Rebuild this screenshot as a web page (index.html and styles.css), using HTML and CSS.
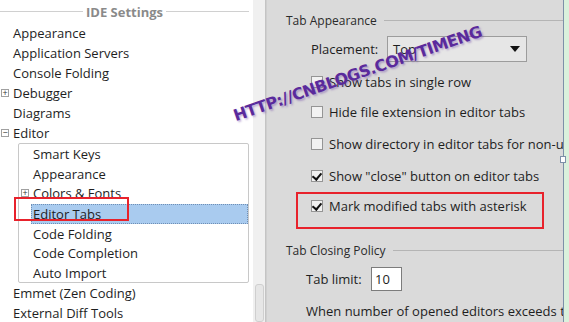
FILE: index.html
```html
<!DOCTYPE html>
<html lang="en">
<head>
  <meta charset="UTF-8" />
  <title>IDE Settings - Editor Tabs</title>
  <link rel="stylesheet" href="styles.css">
</head>
<body>
  <div class="window">
    <div class="tree">
      <div class="tree-title"><span>IDE Settings</span></div>
      <div class="row">Appearance</div>
      <div class="row">Application Servers</div>
      <div class="row">Console Folding</div>
      <div class="row"><span class="exp">+</span>Debugger</div>
      <div class="row">Diagrams</div>
      <div class="row"><span class="exp">−</span>Editor</div>
      <div class="children">
        <div class="row child">Smart Keys</div>
        <div class="row child">Appearance</div>
        <div class="row child"><span class="exp exp-child">+</span>Colors &amp; Fonts</div>
        <div class="row child selected"><span>Editor Tabs</span></div>
        <div class="row child">Code Folding</div>
        <div class="row child">Code Completion</div>
        <div class="row child">Auto Import</div>
      </div>
      <div class="row">Emmet (Zen Coding)</div>
      <div class="row">External Diff Tools</div>
    </div>
    <div class="vscroll"><div class="thumb"></div></div>
    <div class="settings">
      <div class="group-title"><span>Tab Appearance</span></div>
      <div class="field">
        <span class="label">Placement:</span>
        <div class="combo"><span>Top</span><span class="arrow"></span></div>
      </div>
      <div class="check"><span class="box"></span>Show tabs in single row</div>
      <div class="check"><span class="box"></span>Hide file extension in editor tabs</div>
      <div class="check"><span class="box"></span>Show directory in editor tabs for non-unique file names</div>
      <div class="check"><span class="box on"></span>Show "close" button on editor tabs</div>
      <div class="check"><span class="box on"></span>Mark modified tabs with asterisk</div>
      <div class="group-title closing"><span>Tab Closing Policy</span></div>
      <div class="field limit">
        <span class="label">Tab limit:</span>
        <div class="num">10</div>
      </div>
      <div class="note">When number of opened editors exceeds tab limit:</div>
    </div>
    <div class="edge"><span class="handle"></span></div>
  </div>

  <div class="mark mark-left"></div>
  <div class="mark mark-right"></div>
  <div class="watermark">HTTP://CNBLOGS.COM/TIMENG</div>
</body>
</html>
```

FILE: styles.css
```css
* {
  box-sizing: border-box;
}

body {
  margin: 0;
  width: 569px;
  height: 322px;
  overflow: hidden;
  font-family: "Open Sans", "Noto Sans", sans-serif;
  color: #1e1e1e;
  position: relative;
}

.window {
  display: flex;
  height: 322px;
}

/* left tree */
.tree {
  width: 253px;
  background: #fff;
  font-size: 13px;
}

.tree-title {
  height: 23px;
  display: flex;
  align-items: center;
  font-weight: bold;
  color: #8a8a8a;
  padding-right: 4px;
}

.tree-title::before,
.tree-title::after {
  content: "";
  flex: 1;
  border-top: 1px solid #d0d0d0;
}

.tree-title span {
  padding: 0 3px;
}

.row {
  height: 20px;
  line-height: 20px;
  padding-left: 13px;
  position: relative;
  white-space: nowrap;
}

.exp {
  position: absolute;
  left: 1px;
  top: 6px;
  width: 8px;
  height: 8px;
  border: 1px solid #a0a0a0;
  font-size: 9px;
  line-height: 6px;
  text-align: center;
  color: #333;
}

.children {
  margin: 0 4px 0 18px;
  border: 1px solid #c8c8c8;
  border-radius: 2px;
  height: 140px;
}

.child {
  padding-left: 14px;
  height: 19.7px;
}

.exp-child {
  left: 2px;
}

.selected {
  padding-left: 12px;
}

.selected span {
  display: block;
  background: #a9cbef;
  border: 1px dotted #6f8fb5;
  padding-left: 1px;
  line-height: 18px;
  margin-top: 1px;
}

.vscroll {
  width: 13px;
  background: #f0f0f0;
  border-right: 1px solid #c4c4c4;
  display: flex;
  flex-direction: column;
  justify-content: flex-end;
  padding: 0 1px 0 2px;
}

.thumb {
  height: 38px;
  background: #e6e6e6;
  border: 1px solid #cfcfcf;
  border-radius: 3px;
}

/* right settings */
.settings {
  flex: 1;
  background: #dadada;
  font-size: 13px;
  padding-top: 10px;
  border-left: 1px solid #cfcfcf;
  white-space: nowrap;
  overflow: hidden;
}

.group-title {
  display: flex;
  align-items: center;
  height: 20px;
  padding-left: 19px;
  color: #2a2a2a;
  font-size: 12px;
}

.group-title span {
  padding-right: 7px;
}

.group-title::after {
  content: "";
  flex: 1;
  border-top: 1px solid #b4b4b4;
}

.field {
  display: flex;
  align-items: center;
  padding-left: 44px;
  margin-top: 6px;
  height: 26px;
}

.label {
  width: 76px;
}

.combo {
  width: 140px;
  height: 26px;
  border: 1px solid #9c9c9c;
  background: #e6e6e6;
  display: flex;
  align-items: center;
  justify-content: space-between;
  padding: 0 6px 0 5px;
}

.arrow {
  width: 0;
  height: 0;
  border-left: 5px solid transparent;
  border-right: 5px solid transparent;
  border-top: 6px solid #111;
}

.check {
  display: flex;
  align-items: center;
  height: 20px;
  padding-left: 44px;
  margin-top: 10px;
}

.check:nth-of-type(5),
.check:nth-of-type(6) {
  margin-top: 12px;
}

.box {
  flex-shrink: 0;
  width: 12px;
  height: 12px;
  border: 1px solid #959595;
  background: #f2f2f2;
  margin-right: 6px;
  position: relative;
}

.box.on::after {
  content: "";
  position: absolute;
  left: 2px;
  top: 0px;
  width: 4px;
  height: 7px;
  border-right: 2px solid #111;
  border-bottom: 2px solid #111;
  transform: rotate(40deg);
}

.closing {
  margin-top: 24px;
}

.limit {
  padding-left: 39px;
  margin-top: 7px;
  height: 24px;
}

.limit .label {
  width: 65px;
}

.num {
  width: 31px;
  height: 24px;
  background: #fff;
  border: 1px solid #7c7c7c;
  line-height: 22px;
  padding-left: 3px;
}

.note {
  padding-left: 39px;
  margin-top: 10px;
  height: 20px;
  line-height: 20px;
}

.edge {
  width: 6px;
  background: #daf1dc;
  border-left: 1px solid #7d90a8;
  position: relative;
}

.handle {
  position: absolute;
  left: -4px;
  top: 156px;
  width: 6px;
  height: 7px;
  background: #fff;
  border: 1px solid #7d90a8;
}

/* annotations on top of the screenshot */
.mark {
  position: absolute;
  border: 2px solid #e8222c;
}

.mark-left {
  left: 14px;
  top: 197px;
  width: 115px;
  height: 24px;
}

.mark-right {
  left: 296px;
  top: 192px;
  width: 248px;
  height: 37px;
}

.watermark {
  position: absolute;
  left: 237px;
  top: 106px;
  font-family: "DejaVu Sans", sans-serif;
  font-weight: bold;
  font-size: 16px;
  color: #5a2a9c;
  transform: rotate(-19deg);
  transform-origin: left bottom;
  text-shadow: 1px 2px 2px rgba(120, 80, 170, 0.45);
  letter-spacing: -0.5px;
  white-space: nowrap;
}
```
